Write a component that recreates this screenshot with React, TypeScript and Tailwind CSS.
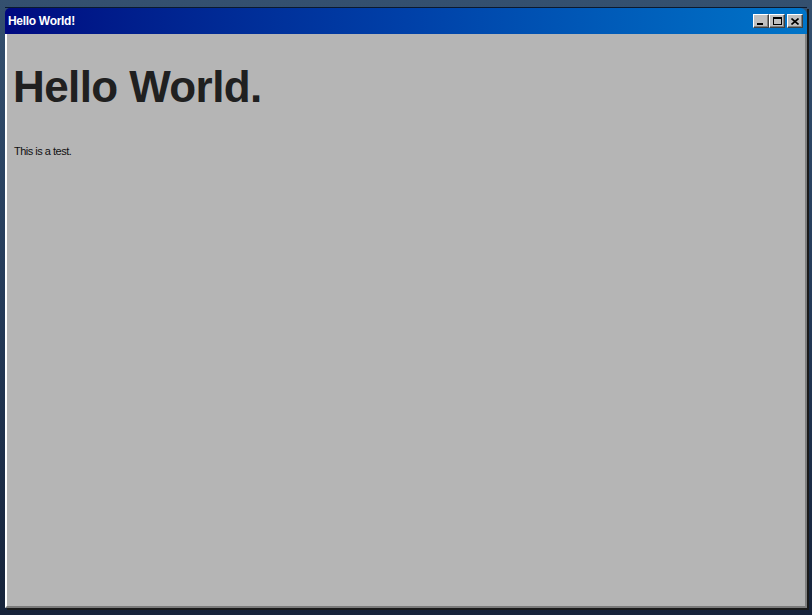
import React from "react";

function TitleButton({ children, className = "" }: { children: React.ReactNode; className?: string }) {
  return (
    <div
      className={`w-[16px] h-[14px] bg-[#c0c0c0] border-t border-l border-t-white border-l-white border-r border-b border-r-[#404040] border-b-[#404040] flex items-center justify-center shadow-[inset_-1px_-1px_0_#808080] ${className}`}
    >
      {children}
    </div>
  );
}

export default function App() {
  return (
    <div className="w-[812px] h-[615px] bg-gradient-to-b from-[#34506f] via-[#243a58] to-[#16233a] pl-[5px] pt-[7px] pr-[5px] pb-[7px] overflow-hidden">
      <div className="w-[802px] h-[601px] flex flex-col border-t border-[#0b1a30] shadow-[2px_2px_0_#1a1a1a]">
        <div className="h-[26px] rounded-tl-[5px] rounded-tr-[7px] bg-gradient-to-r from-[#000880] via-[#0040a8] to-[#0074c8] flex items-center pl-[3px] pr-[4px]">
          <span className="text-white font-bold text-[12px] tracking-[-0.3px] [font-family:'Liberation_Sans',Arial,sans-serif]">
            Hello World!
          </span>
          <div className="ml-auto flex items-center">
            <TitleButton>
              <div className="w-[6px] h-[2px] bg-black mt-[6px] mr-[2px]" />
            </TitleButton>
            <TitleButton>
              <div className="w-[9px] h-[8px] border border-black border-t-2" />
            </TitleButton>
            <TitleButton className="ml-[2px]">
              <svg width="8" height="7" viewBox="0 0 8 7">
                <path d="M0.5 0.5 L7.5 6.5 M7.5 0.5 L0.5 6.5" stroke="black" strokeWidth="1.6" />
              </svg>
            </TitleButton>
          </div>
        </div>
        <div className="flex-1 bg-[#b5b5b5] border-l-2 border-l-white border-r-2 border-r-[#808080] border-b-2 border-b-[#7a7a7a] px-[6px] text-[#202020]">
          <h1 className="mt-[27px] text-[44px] leading-[52px] font-bold tracking-[-0.6px] [font-family:'Liberation_Sans',Arial,sans-serif]">
            Hello World.
          </h1>
          <p className="mt-[30px] pl-[1px] text-[11px] text-[#111111] tracking-[-0.5px] [font-family:'Liberation_Sans',Arial,sans-serif]">
            This is a test.
          </p>
        </div>
      </div>
    </div>
  );
}
